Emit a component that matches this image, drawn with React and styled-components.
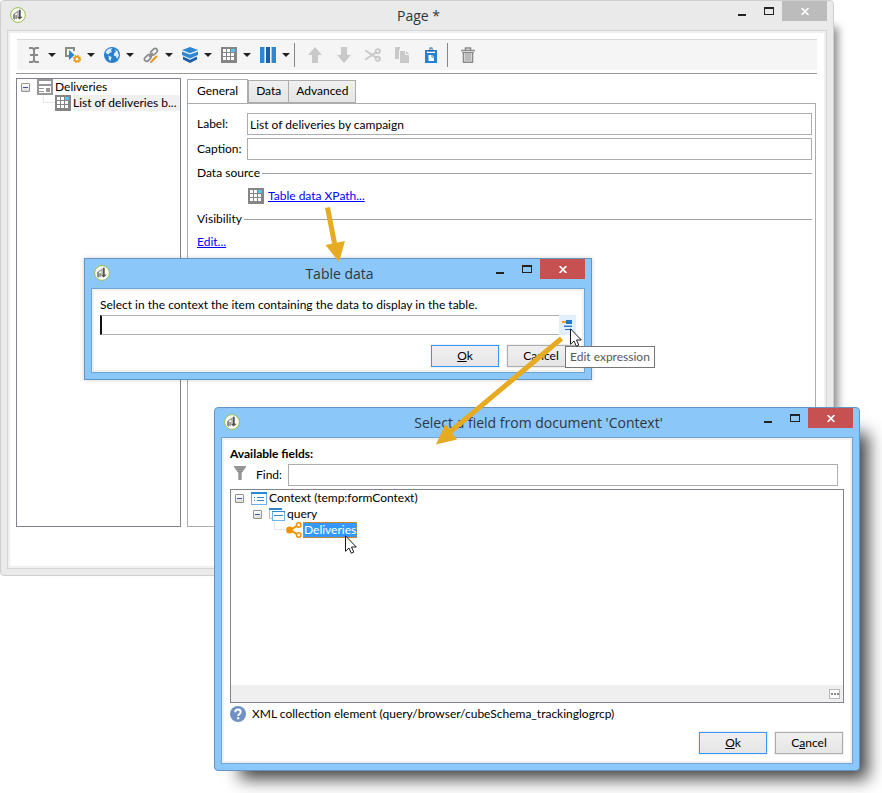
import React, { useState } from "react";
import styled, { createGlobalStyle } from "styled-components";

/* ---------- icons ---------- */

const AppLogo = () => (
  <svg width="16" height="16" viewBox="0 0 16 16">
    <circle cx="8" cy="8" r="7.4" fill="#fbfbf6" stroke="#97bf4f" strokeWidth="1" />
    <path d="M3 7.5 5 5.8V13L3 11.5Z" fill="#8a8a86" />
    <path d="M5 5.4 8.8 3V10.5H7.4V6L5 7Z" fill="#a5a5a0" />
    <path d="M9.2 2.8H10.6V10H9.2Z" fill="#2c2c2c" />
    <path d="M7.2 10 9.4 12.6 12.6 10 10.6 9.4Z" fill="#55554f" />
    <path d="M5.4 8H6.8V12H5.4Z" fill="#77776f" />
  </svg>
);

const TextCursorIcon = () => (
  <svg width="16" height="16" viewBox="0 0 16 16" fill="none" stroke="#8a8a8a" strokeWidth="2">
    <path d="M3 1H6.5L8 2.5 9.5 1H13M3 15H6.5L8 13.5 9.5 15H13M8 2V14M4 8H12" />
  </svg>
);

const FormGearIcon = () => (
  <svg width="16" height="16" viewBox="0 0 16 16">
    <path d="M5 9H1V1H9V4" fill="none" stroke="#8a8a8a" strokeWidth="2" />
    <path d="M4 3V13L9.5 8Z" fill="#2d83cf" />
    <circle cx="12" cy="12" r="2.4" fill="#f5f5f5" stroke="#ee9a1c" strokeWidth="1.7" />
    <circle cx="12" cy="12" r="3.5" fill="none" stroke="#ee9a1c" strokeWidth="1.2" strokeDasharray="1.5 1.25" />
  </svg>
);

const GlobeIcon = () => (
  <svg width="16" height="16" viewBox="0 0 16 16">
    <circle cx="8" cy="8" r="8" fill="#2a7fca" />
    <path d="M1.5 5 4 2 8.5 1 7 3.2 8 5 5.5 6 4.5 7.5 2.5 6.5Z" fill="#d9ecfa" />
    <path d="M4.5 8.5 7.6 10 6.5 14 5 12.5Z" fill="#d9ecfa" />
    <path d="M10 2.4 13.5 4 15 8.5 13 12 12 9.5 9.8 8.4 10.2 6 12 4.6Z" fill="#d9ecfa" />
  </svg>
);

const LinkIcon = () => (
  <svg width="16" height="16" viewBox="0 0 16 16" fill="none">
    <g stroke="#8a8a8a" strokeWidth="1.6">
      <rect x="-3.8" y="-2.2" width="7.6" height="4.4" rx="2.2" transform="translate(11 4.8) rotate(-45)" />
      <rect x="-3.8" y="-2.2" width="7.6" height="4.4" rx="2.2" transform="translate(4.8 11) rotate(-45)" />
      <path d="M6 10 10 6" />
    </g>
    <path d="M8.5 14.5 14 9" stroke="#ee9a1c" strokeWidth="2.2" />
    <path d="M7 16 7.6 13.8 9.2 15.4Z" fill="#c9781c" />
  </svg>
);

const LayersIcon = () => (
  <svg width="16" height="16" viewBox="0 0 16 16">
    <path d="M8 0 16 3 8 6.2 0 3Z" fill="#2f86d1" />
    <path d="M0 4.4 8 7.6 16 4.4V8L8 11.5 0 8Z" fill="#2f86d1" />
    <path d="M1 9.6 8 12.8 15 9.6V12.5L8 16 1 12.5Z" fill="#1d5ea8" />
  </svg>
);

const TableIcon = () => (
  <svg width="16" height="16" viewBox="0 0 16 16" shapeRendering="crispEdges">
    <rect width="16" height="16" fill="#858585" />
    <path d="M2 2H5V5H2ZM6 2H9V5H6ZM2 6H5V9H2ZM6 6H9V9H6ZM10 6H13V9H10ZM2 10H5V13H2ZM6 10H9V13H6ZM10 10H13V13H10Z" fill="#fff" />
    <rect x="10" y="2" width="4" height="3" fill="#55c4f2" />
  </svg>
);

const ColumnsIcon = () => (
  <svg width="16" height="16" viewBox="0 0 16 16" shapeRendering="crispEdges">
    <path d="M0 0H4V16H0ZM12 0H16V16H12Z" fill="#2f86d1" />
    <path d="M4 0H5V16H4ZM11 0H12V16H11Z" fill="#9cc8ec" />
    <path d="M6 0H10V16H6Z" fill="#1d5ea8" />
  </svg>
);

const ArrowIcon = ({ down }) => (
  <svg width="16" height="16" viewBox="0 0 16 16">
    <path
      d={down ? "M5 0H11V8H15L8 16 1 8H5Z" : "M5 16H11V8H15L8 0 1 8H5Z"}
      fill="#c9c9c9"
    />
  </svg>
);

const ScissorsIcon = () => (
  <svg width="16" height="16" viewBox="0 0 16 16" fill="none" stroke="#c9c9c9" strokeWidth="1.9">
    <circle cx="12.8" cy="4.2" r="2.1" />
    <circle cx="12.8" cy="11.8" r="2.1" />
    <path d="M0 3.2 11 10.6M0 12.8 11 5.4" />
  </svg>
);

const CopyIcon = () => (
  <svg width="16" height="16" viewBox="0 0 16 16" fill="#c9c9c9">
    <path d="M1 0H6V2L5 3V12H1Z" />
    <path d="M6 4H11V8H15V16H6Z" />
    <path d="M12 4 15 7H12Z" />
  </svg>
);

const PasteIcon = () => (
  <svg width="16" height="16" viewBox="0 0 16 16">
    <path d="M2 3H14V16H2Z" fill="#2a7fd0" />
    <path d="M5 5V3H6.5V0.5H9.5V3H11V5Z" fill="#1d5ea8" />
    <path d="M7.3 1.6H8.7V3H7.3Z" fill="#fff" />
    <path d="M4 4.6H12V6H4Z" fill="#fff" />
    <path d="M5.5 8H8.5V10.5H11V14H5.5Z" fill="#fff" />
    <path d="M9.3 8 11 9.7H9.3Z" fill="#fff" />
  </svg>
);

const TrashIcon = () => (
  <svg width="16" height="16" viewBox="0 0 16 16" fill="none" stroke="#8a8a8a">
    <path d="M1 3.5H15M5.5 3V1H10.5V3" strokeWidth="1.6" />
    <path d="M3.5 5V15.2H12.5V5" strokeWidth="1.6" />
    <path d="M6 5V14M8 5V14M10 5V14" strokeWidth="1.1" />
    <path d="M2 5.5H14" strokeWidth="1" />
  </svg>
);

const FormIcon = () => (
  <svg width="16" height="16" viewBox="0 0 16 16" shapeRendering="crispEdges">
    <rect x="1" y="1" width="14" height="14" fill="#fff" stroke="#979797" strokeWidth="2" />
    <path d="M0 5H16V7H0ZM2 9H7V10H2ZM2 12H7V13H2ZM9 9H13V13H9Z" fill="#979797" />
  </svg>
);

const SchemaIcon = () => (
  <svg width="16" height="13" viewBox="0 0 16 13" shapeRendering="crispEdges">
    <rect x="0.5" y="0.5" width="15" height="12" fill="#fff" stroke="#6fb1e8" />
    <rect width="16" height="2" fill="#2f86d1" />
    <path d="M3 5H4V6H3ZM6 5H13V6H6ZM3 8H4V9H3ZM6 8H13V9H6Z" fill="#2f86d1" />
  </svg>
);

const NodeIcon = () => (
  <svg width="16" height="13" viewBox="0 0 16 13" shapeRendering="crispEdges">
    <path d="M2.5 10.5H0.5V0.5H12.5V2" fill="none" stroke="#9ccaf0" />
    <rect width="13" height="2" fill="#2f86d1" />
    <rect x="3.5" y="3.5" width="12" height="9" fill="#fff" stroke="#6fb1e8" />
    <path d="M3 3H16V4H3ZM5 7H14V8H5Z" fill="#2f86d1" />
  </svg>
);

const CollectionIcon = () => (
  <svg width="16" height="16" viewBox="0 0 16 16">
    <path d="M12.5 3.2 4 8 12.5 12.8" fill="none" stroke="#ee9208" strokeWidth="2" />
    <circle cx="3.6" cy="8" r="3.5" fill="#ee9208" />
    <circle cx="12.7" cy="3" r="2.2" fill="#fff" stroke="#ee9208" strokeWidth="1.6" />
    <circle cx="12.7" cy="13" r="2.2" fill="#fff" stroke="#ee9208" strokeWidth="1.6" />
  </svg>
);

const FunnelIcon = () => (
  <svg width="12" height="14" viewBox="0 0 12 14">
    <path d="M0 0H12V1L7.7 7V14H4.3V7L0 1Z" fill="#949494" />
  </svg>
);

const HelpIcon = () => (
  <svg width="16" height="16" viewBox="0 0 16 16">
    <circle cx="8" cy="8" r="8" fill="#7091c4" />
    <path d="M5.2 6.2C5.2 2.6 10.7 2.8 10.7 6 10.7 8 8.2 7.8 8.2 10" fill="none" stroke="#fff" strokeWidth="1.9" />
    <rect x="7.1" y="11.2" width="2.1" height="2.1" fill="#fff" />
  </svg>
);

const ExpressionIcon = () => (
  <svg width="11" height="11" viewBox="0 0 11 11" shapeRendering="crispEdges">
    <path d="M0 1H4V3H0Z" fill="#ee9a1c" />
    <path d="M4 0H10V4H4ZM2 6H10V7H2ZM3 9H10V10H3Z" fill="#2276c4" />
    <path d="M2 5H10V6H2Z" fill="#8cbfe8" />
  </svg>
);

const MinimizeIcon = () => (
  <svg width="8" height="9" viewBox="0 0 8 9">
    <rect y="7" width="8" height="2" fill="#222" />
  </svg>
);

const MaximizeIcon = () => (
  <svg width="10" height="8" viewBox="0 0 10 8" shapeRendering="crispEdges">
    <path d="M0 0H10V8H0ZM1 2V7H9V2Z" fill="#222" fillRule="evenodd" />
  </svg>
);

const CloseIcon = () => (
  <svg width="8" height="7" viewBox="0 0 8 7">
    <path d="M0.6 0 7.4 7M7.4 0 0.6 7" stroke="#fff" strokeWidth="1.7" />
  </svg>
);

const PointerIcon = () => (
  <svg width="12" height="19" viewBox="0 0 12 19">
    <path
      d="M0.5 0.8V16.3L4 13 6.3 18.2 8.8 17.1 6.5 12H11.3Z"
      fill="#fff"
      stroke="#1a1a1a"
      strokeWidth="1"
    />
  </svg>
);

/* ---------- shared parts ---------- */

const GlobalStyle = createGlobalStyle`
  * {
    box-sizing: border-box;
  }

  body {
    margin: 0;
    background: #fff;
    color: #000;
    font-family: Lato, "Open Sans", sans-serif;
    font-size: 12px;
    line-height: 16px;
  }

  button, input {
    font: inherit;
    color: inherit;
  }

  svg {
    display: block;
    flex: none;
  }
`;

const Desktop = styled.main`
  position: relative;
  min-height: 793px;
  overflow: hidden;
`;

const Frame = styled.section`
  display: flex;
  flex-direction: column;
  border: 1px solid ${(p) => (p.$active ? "#6195c4" : "#cfcfcf")};
  background: ${(p) => (p.$active ? "#8cc7f9" : "#eaeaea")};
`;

const PageFrame = styled(Frame)`
  margin-right: 48px;
  border-radius: 4px;
  box-shadow: 21px 10px 8px -17px rgba(0, 0, 0, 0.45);
`;

const TableDataFrame = styled(Frame)`
  position: absolute;
  left: 84px;
  top: 258px;
  width: 508px;
  box-shadow: 0 0 4px rgba(0, 0, 0, 0.2);
`;

const FieldFrame = styled(Frame)`
  position: absolute;
  left: 214px;
  right: 22px;
  top: 407px;
  border-radius: 4px;
  box-shadow: 17px 17px 16px -9px rgba(0, 0, 0, 0.75);
`;

const TitleBar = styled.header`
  display: grid;
  grid-template-columns: 120px 1fr 120px;
  align-items: center;
  height: 29px;
  padding: 0 6px 1px 9px;
`;

const Title = styled.h1`
  margin: 0;
  padding-top: 2px;
  color: #2f3640;
  font-family: "Open Sans", sans-serif;
  font-size: 14px;
  font-weight: 400;
  line-height: 20px;
  text-align: center;
  white-space: nowrap;
`;

const Controls = styled.div`
  display: flex;
  align-self: start;
  justify-content: flex-end;
`;

const ControlButton = styled.button`
  display: flex;
  align-items: center;
  justify-content: center;
  width: 27px;
  height: 20px;
  padding: 0;
  border: 0;
  background: none;
`;

const CloseButton = styled(ControlButton)`
  width: 45px;
  background: ${(p) => (p.$active ? "#c75050" : "#bcbcbc")};
`;

const Client = styled.div`
  display: flex;
  flex-direction: column;
  margin: 0 6px 6px;
  border: 1px solid ${(p) => (p.$active ? "#6fa3d2" : "#d5d5d5")};
  outline: 2px solid #f0f0f0;
  outline-offset: -3px;
  background: #fff;
`;

const WindowTitle = ({ title, active }) => (
  <TitleBar>
    <AppLogo />
    <Title>{title}</Title>
    <Controls>
      <ControlButton aria-label="Minimize"><MinimizeIcon /></ControlButton>
      <ControlButton aria-label="Maximize"><MaximizeIcon /></ControlButton>
      <CloseButton aria-label="Close" $active={active}><CloseIcon /></CloseButton>
    </Controls>
  </TitleBar>
);

const TextInput = styled.input`
  flex: 1;
  min-width: 0;
  height: ${(p) => (p.$short ? "20px" : "22px")};
  padding: 0 2px;
  border: 1px solid #abadb3;
  border-radius: 0;
  outline: 0;
  background: #fff;
`;

const Button = styled.button`
  width: 68px;
  height: 22px;
  padding: 0;
  border: 1px solid ${(p) => (p.$primary ? "#3399ff" : "#acacac")};
  outline: 1px solid #f0f0f0;
  background: linear-gradient(#f0f0f0, #e5e5e5);
  line-height: 18px;
`;

const ButtonRow = styled.div`
  display: flex;
  justify-content: flex-end;
  gap: 8px;
  padding-right: 1px;
`;

const Link = styled.a`
  color: #0000ff;
  text-decoration: underline;
`;

const DialogButtons = () => (
  <ButtonRow>
    <Button $primary><u>O</u>k</Button>
    <Button>C<u>a</u>ncel</Button>
  </ButtonRow>
);

/* ---------- page window ---------- */

const Toolbar = styled.div`
  display: flex;
  align-items: center;
  height: 31px;
  margin: 8px 9px 3px;
  padding-left: 9px;
  border-top: 1px solid #d9d9d9;
  background: #f5f5f5;
`;

const Divider = styled.div`
  height: 1px;
  margin: 0 9px 4px 8px;
  background: #999;
`;

const MenuGroup = styled.div`
  display: flex;
  gap: 9px;
`;

const ActionGroup = styled.div`
  display: flex;
  gap: 13px;
`;

const ToolButton = styled.button`
  display: flex;
  align-items: center;
  gap: 6px;
  padding: 0;
  border: 0;
  background: none;
`;

const Caret = styled.span`
  width: 8px;
  border: solid transparent;
  border-width: 4px 4px 0;
  border-top-color: #222;
`;

const Separator = styled.span`
  width: 1px;
  height: 24px;
  margin: 0 12px 0 ${(p) => (p.$wide ? "8px" : "4px")};
  background: #888;
`;

const Columns = styled.div`
  display: flex;
  gap: 6px;
  min-height: 449px;
  margin: 0 10px 41px 8px;
`;

const TreePane = styled.nav`
  flex: 0 0 165px;
  min-width: 0;
  border: 1px solid #82828c;
`;

const TreeRow = styled.div`
  display: flex;
  align-items: center;
  gap: 2px;
  height: 16px;
  padding-left: ${(p) => p.$indent}px;
  white-space: nowrap;
`;

const Toggle = styled.button`
  width: 9px;
  height: 9px;
  margin-right: 5px;
  padding: 0 1px;
  border: 1px solid #919191;
  border-radius: 1px;
  background: linear-gradient(#fff, #ddd);

  &::before {
    content: "";
    display: block;
    height: 1px;
    background: #3c559c;
  }
`;

const Elbow = styled.span`
  align-self: start;
  width: 12px;
  height: 8px;
  margin-right: -2px;
  border: solid #e6e6e6;
  border-width: 0 0 1px 1px;
`;

const TreeText = styled.span`
  flex: 1;
  overflow: hidden;
  background: ${(p) => (p.$shaded ? "#f0f0f0" : "none")};
`;

const Editor = styled.div`
  display: flex;
  flex: 1;
  flex-direction: column;
  min-width: 0;
`;

const TabList = styled.div`
  display: flex;
  align-items: flex-end;
  height: 25px;
`;

const Tab = styled.button`
  height: ${(p) => (p.$selected ? "25px" : "23px")};
  margin-bottom: ${(p) => (p.$selected ? "-1px" : "0")};
  margin-right: ${(p) => (p.$selected ? "0" : "-1px")};
  padding: 0 ${(p) => (p.$selected ? "9px" : "7px")} 2px;
  border: 1px solid #acacac;
  border-bottom-width: ${(p) => (p.$selected ? "0" : "1px")};
  background: ${(p) => (p.$selected ? "#fff" : "linear-gradient(#f0f0f0, #e5e5e5)")};
`;

const TabPanel = styled.div`
  display: flex;
  flex: 1;
  flex-direction: column;
  gap: 7px;
  padding: 9px 3px 0 9px;
  border: 1px solid #acacac;
`;

const Fields = styled.div`
  display: grid;
  grid-template-columns: 50px 1fr;
  row-gap: 3px;
  align-items: center;
  margin-bottom: -2px;
`;

const GroupTitle = styled.h2`
  display: flex;
  align-items: center;
  gap: 2px;
  margin: 0;
  font-size: 12px;
  font-weight: 400;

  &::after {
    content: "";
    flex: 1;
    height: 1px;
    background: #a0a0a0;
  }
`;

const LinkRow = styled.div`
  display: flex;
  gap: 4px;
  padding-left: ${(p) => (p.$indented ? "51px" : "0")};
`;

const menuIcons = [
  ["Insert text", TextCursorIcon],
  ["Add control", FormGearIcon],
  ["Add web item", GlobeIcon],
  ["Add link", LinkIcon],
  ["Add container", LayersIcon],
  ["Add table", TableIcon],
  ["Add column", ColumnsIcon],
];

const tabs = ["General", "Data", "Advanced"];

const PageWindow = () => {
  const [tab, setTab] = useState("General");
  const [label, setLabel] = useState("List of deliveries by campaign");

  return (
    <PageFrame>
      <WindowTitle title="Page *" />
      <Client>
        <Toolbar role="toolbar">
          <MenuGroup>
            {menuIcons.map(([name, Icon]) => (
              <ToolButton key={name} aria-label={name}>
                <Icon />
                <Caret />
              </ToolButton>
            ))}
          </MenuGroup>
          <Separator />
          <ActionGroup>
            <ToolButton aria-label="Move up"><ArrowIcon /></ToolButton>
            <ToolButton aria-label="Move down"><ArrowIcon down /></ToolButton>
            <ToolButton aria-label="Cut"><ScissorsIcon /></ToolButton>
            <ToolButton aria-label="Copy"><CopyIcon /></ToolButton>
            <ToolButton aria-label="Paste"><PasteIcon /></ToolButton>
          </ActionGroup>
          <Separator $wide />
          <ToolButton aria-label="Delete"><TrashIcon /></ToolButton>
        </Toolbar>
        <Divider />
        <Columns>
          <TreePane>
            <TreeRow $indent={4}>
              <Toggle aria-label="Collapse" />
              <FormIcon />
              <TreeText>Deliveries</TreeText>
            </TreeRow>
            <TreeRow $indent={26}>
              <Elbow />
              <TableIcon />
              <TreeText $shaded>List of deliveries b...</TreeText>
            </TreeRow>
          </TreePane>
          <Editor>
            <TabList role="tablist">
              {tabs.map((name) => (
                <Tab
                  key={name}
                  role="tab"
                  aria-selected={tab === name}
                  $selected={tab === name}
                  onClick={() => setTab(name)}
                >
                  {name}
                </Tab>
              ))}
            </TabList>
            <TabPanel role="tabpanel">
              <Fields>
                <label htmlFor="label">Label:</label>
                <TextInput id="label" value={label} onChange={(e) => setLabel(e.target.value)} />
                <label htmlFor="caption">Caption:</label>
                <TextInput id="caption" />
              </Fields>
              <GroupTitle>Data source</GroupTitle>
              <LinkRow $indented>
                <TableIcon />
                <Link href="#xpath">Table data XPath...</Link>
              </LinkRow>
              <GroupTitle>Visibility</GroupTitle>
              <LinkRow>
                <Link href="#visibility">Edit...</Link>
              </LinkRow>
            </TabPanel>
          </Editor>
        </Columns>
      </Client>
    </PageFrame>
  );
};

/* ---------- table data dialog ---------- */

const TableDataBody = styled.div`
  display: flex;
  flex-direction: column;
  padding: 8px 8px 5px;
`;

const ExpressionRow = styled.div`
  display: flex;
  margin: 2px 0 10px;
`;

const EditButton = styled.button`
  display: flex;
  justify-content: center;
  width: 17px;
  height: 20px;
  padding: 5px 0 0;
  border: 0;
  background: #e0effb;
`;

const ExpressionInput = styled(TextInput)`
  border-left: 2px solid #111;
  border-right: 0;
`;

const TableDataDialog = () => (
  <TableDataFrame $active>
    <WindowTitle title="Table data" active />
    <Client $active>
      <TableDataBody>
        <label htmlFor="expression">
          Select in the context the item containing the data to display in the table.
        </label>
        <ExpressionRow>
          <ExpressionInput id="expression" $short />
          <EditButton aria-label="Edit expression"><ExpressionIcon /></EditButton>
        </ExpressionRow>
        <DialogButtons />
      </TableDataBody>
    </Client>
  </TableDataFrame>
);

/* ---------- field selection dialog ---------- */

const FieldBody = styled.div`
  display: flex;
  flex-direction: column;
  padding: 8px 8px 9px;
`;

const FindRow = styled.div`
  display: flex;
  align-items: center;
  margin: 2px 6px 3px 4px;

  svg {
    margin-bottom: 5px;
  }

  label {
    width: 42px;
    padding-left: 10px;
  }
`;

const FieldTree = styled.div`
  display: flex;
  flex-direction: column;
  min-height: 214px;
  border: 1px solid #82828c;
`;

const StatusStrip = styled.div`
  display: flex;
  align-items: center;
  justify-content: flex-end;
  height: 17px;
  margin-top: auto;
  padding-right: 3px;
  background: #efefef;
`;

const MoreButton = styled.button`
  display: flex;
  align-items: center;
  justify-content: center;
  gap: 1px;
  width: 11px;
  height: 10px;
  padding: 0;
  border: 1px solid #b5b5b5;
  background: #fff;

  i {
    width: 2px;
    height: 2px;
    background: #888;
  }
`;

const Selected = styled.span`
  height: 16px;
  margin-left: -1px;
  padding: 0 1px;
  line-height: 15px;
  outline: 1px dotted #d98a36;
  outline-offset: -1px;
  background: #3399ff;
  color: #fff;
`;

const Hint = styled.p`
  display: flex;
  gap: 6px;
  margin: 3px 0 10px;
`;

const FieldDialog = () => (
  <FieldFrame $active>
    <WindowTitle title="Select a field from document 'Context'" active />
    <Client $active>
      <FieldBody>
        <strong>Available fields:</strong>
        <FindRow>
          <FunnelIcon />
          <label htmlFor="find">Find:</label>
          <TextInput id="find" />
        </FindRow>
        <FieldTree>
          <TreeRow $indent={4}>
            <Toggle aria-label="Collapse" />
            <SchemaIcon />
            <TreeText>Context (temp:formContext)</TreeText>
          </TreeRow>
          <TreeRow $indent={22}>
            <Toggle aria-label="Collapse" />
            <NodeIcon />
            <TreeText>query</TreeText>
          </TreeRow>
          <TreeRow $indent={43}>
            <Elbow />
            <CollectionIcon />
            <Selected>Deliveries</Selected>
          </TreeRow>
          <StatusStrip>
            <MoreButton aria-label="More"><i /><i /><i /></MoreButton>
          </StatusStrip>
        </FieldTree>
        <Hint>
          <HelpIcon />
          XML collection element (query/browser/cubeSchema_trackinglogrcp)
        </Hint>
        <DialogButtons />
      </FieldBody>
    </Client>
  </FieldFrame>
);

/* ---------- annotations over the windows ---------- */

const Arrows = styled.svg`
  position: absolute;
  left: 0;
  top: 0;
  pointer-events: none;
`;

const Tooltip = styled.div`
  position: absolute;
  left: 565px;
  top: 346px;
  padding: 2px 4px;
  border: 1px solid #767676;
  background: #fff;
  color: #575757;
  white-space: nowrap;
`;

const Pointer = styled.span`
  position: absolute;
  left: ${(p) => p.$x}px;
  top: ${(p) => p.$y}px;
  pointer-events: none;
`;

const App = () => (
  <Desktop>
    <GlobalStyle />
    <PageWindow />
    <TableDataDialog />
    <FieldDialog />
    <Arrows width="600" height="460" viewBox="0 0 600 460" fill="#e6ab22" stroke="#e6ab22">
      <path d="M327.5 207.5 335 246M561.5 338.5 450 432" strokeWidth="5" />
      <path d="M339 262 325.5 245 345 241ZM436 444.5 445.5 424 457 439.5Z" stroke="none" />
    </Arrows>
    <Tooltip role="tooltip">Edit expression</Tooltip>
    <Pointer $x={570} $y={328}><PointerIcon /></Pointer>
    <Pointer $x={345} $y={535}><PointerIcon /></Pointer>
  </Desktop>
);

export default App;
